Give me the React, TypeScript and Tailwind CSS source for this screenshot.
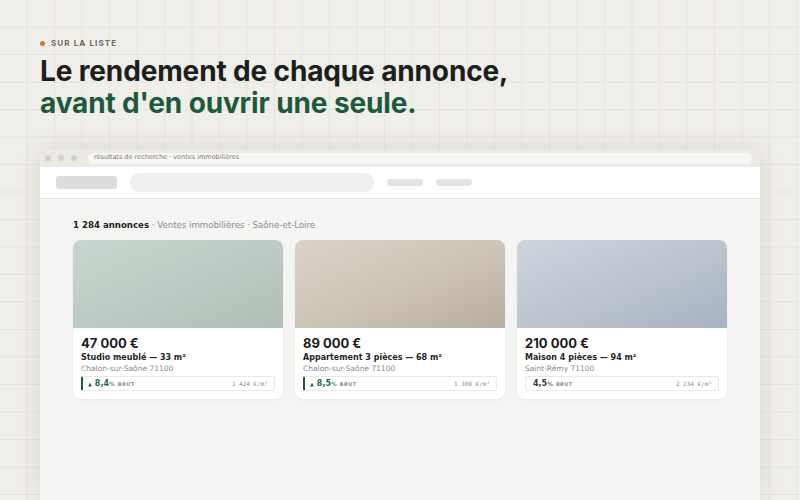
const listings = [
  {
    price: '47 000 €',
    title: 'Studio meublé — 33 m²',
    city: 'Chalon-sur-Saône 71100',
    yieldPct: '8,4',
    perM2: '1 424 €/m²',
    good: true,
    photo: 'bg-gradient-to-br from-[#c9d6cf] via-[#bccbc3] to-[#aebfb6]',
  },
  {
    price: '89 000 €',
    title: 'Appartement 3 pièces — 68 m²',
    city: 'Chalon-sur-Saône 71100',
    yieldPct: '8,5',
    perM2: '1 309 €/m²',
    good: true,
    photo: 'bg-gradient-to-br from-[#d9d3c8] via-[#cdc5b7] to-[#b9ae9e]',
  },
  {
    price: '210 000 €',
    title: 'Maison 4 pièces — 94 m²',
    city: 'Saint-Rémy 71100',
    yieldPct: '4,5',
    perM2: '2 234 €/m²',
    good: false,
    photo: 'bg-gradient-to-br from-[#cdd4dc] via-[#bcc5cf] to-[#a8b3c1]',
  },
]

type Listing = (typeof listings)[number]

const ListingCard = ({ item }: { item: Listing }) => {
  return (
    <div className="bg-white rounded-[8px] overflow-hidden shadow-[0_1px_3px_rgba(0,0,0,0.05)]">
      <div className={`h-[88px] ${item.photo}`} />
      <div className="px-[8px] pt-[7px] pb-[8px]">
        <div className="font-['Inter',sans-serif] font-bold text-[13px] leading-[16px] text-[#1b1b1b]">{item.price}</div>
        <div className="mt-[2px] font-['DejaVu_Sans',sans-serif] font-bold text-[8px] leading-[10px] text-[#262626]">{item.title}</div>
        <div className="mt-[1px] font-['DejaVu_Sans',sans-serif] text-[7.5px] leading-[10px] text-[#8a8a8a]">{item.city}</div>
        <div
          className={`mt-[2px] h-[15px] flex items-center justify-between pr-[6px] border border-[#e8e8e6] rounded-[2px] ${
            item.good ? 'border-l-2 border-l-[#1d5a3c] pl-[5px]' : 'pl-[7px]'
          }`}
        >
          <div className={`flex items-baseline gap-[3px] font-['DejaVu_Sans',sans-serif] ${item.good ? 'text-[#1d6a45]' : 'text-[#3a3a3a]'}`}>
            {item.good && <span className="text-[5px]">▲</span>}
            <span className="font-bold text-[8px]">
              {item.yieldPct}
              <span className="text-[6px] font-normal">%</span>
            </span>
            <span className="text-[5px] font-bold tracking-[0.08em] text-[#8a8a8a]">BRUT</span>
          </div>
          <span className="font-['DejaVu_Sans_Mono',monospace] text-[6px] text-[#8a8a8a]">{item.perM2}</span>
        </div>
      </div>
    </div>
  )
}

const App = () => {
  return (
    <div className="w-[800px] h-[500px] overflow-hidden bg-[#f0eee9] bg-[linear-gradient(to_right,#e6e3dc_1px,transparent_1px),linear-gradient(to_bottom,#e6e3dc_1px,transparent_1px)] bg-[size:27.5px_27.5px] bg-[position:-1px_-1px] flex flex-col">
      <div className="pl-[40px] pt-[37px]">
        <div className="flex items-center gap-[6px]">
          <span className="w-[5px] h-[5px] rounded-full bg-[#c97a35]" />
          <span className="font-['Inter',sans-serif] font-bold text-[8px] tracking-[0.14em] text-[#6b6a63]">SUR LA LISTE</span>
        </div>
        <h1 className="mt-[6px] font-['Inter',sans-serif] font-bold text-[28px] leading-[32px] tracking-[-0.005em] text-[#1b201c]">
          Le rendement de chaque annonce,
          <br />
          <span className="text-[#1d5a3c]">avant d'en ouvrir une seule.</span>
        </h1>
      </div>

      <div className="mx-[40px] mt-[30px] flex-1 flex flex-col shadow-[0_0_24px_rgba(60,50,30,0.12)]">
        {/* window chrome */}
        <div className="h-[18px] bg-[#ebe9e3] flex items-center pl-[5px] pr-[8px] gap-[6px]">
          <div className="flex gap-[7px]">
            <span className="w-[6px] h-[6px] rounded-full bg-[#d3d1cb]" />
            <span className="w-[6px] h-[6px] rounded-full bg-[#d3d1cb]" />
            <span className="w-[6px] h-[6px] rounded-full bg-[#d3d1cb]" />
          </div>
          <div className="ml-[5px] flex-1 h-[11px] rounded-full bg-[#f7f6f2] flex items-center px-[6px]">
            <span className="font-['DejaVu_Sans',sans-serif] text-[6.5px] text-[#7b7a74]">résultats de recherche · ventes immobilières</span>
          </div>
        </div>

        {/* site header */}
        <div className="h-[32px] bg-white border-b border-[#e6e6e6] flex items-center pl-[16px] gap-[13px]">
          <div className="w-[61px] h-[13px] rounded-[3px] bg-[#dcdcdc]" />
          <div className="w-[244px] h-[19px] rounded-full bg-[#efefef]" />
          <div className="w-[36px] h-[7px] rounded-[3px] bg-[#e3e3e3]" />
          <div className="w-[36px] h-[7px] rounded-[3px] bg-[#e3e3e3]" />
        </div>

        {/* results */}
        <div className="flex-1 bg-[#f4f4f3] px-[33px] pt-[20px]">
          <div className="font-['DejaVu_Sans',sans-serif] text-[8.6px] leading-[12px] text-[#8a8a8a]">
            <span className="font-bold text-[#222]">1 284 annonces</span> · Ventes immobilières · Saône-et-Loire
          </div>
          <div className="mt-[9px] grid grid-cols-3 gap-[12px] w-[654px]">
            {listings.map((item) => (
              <ListingCard key={item.price} item={item} />
            ))}
          </div>
        </div>
      </div>
    </div>
  )
}

export default App
